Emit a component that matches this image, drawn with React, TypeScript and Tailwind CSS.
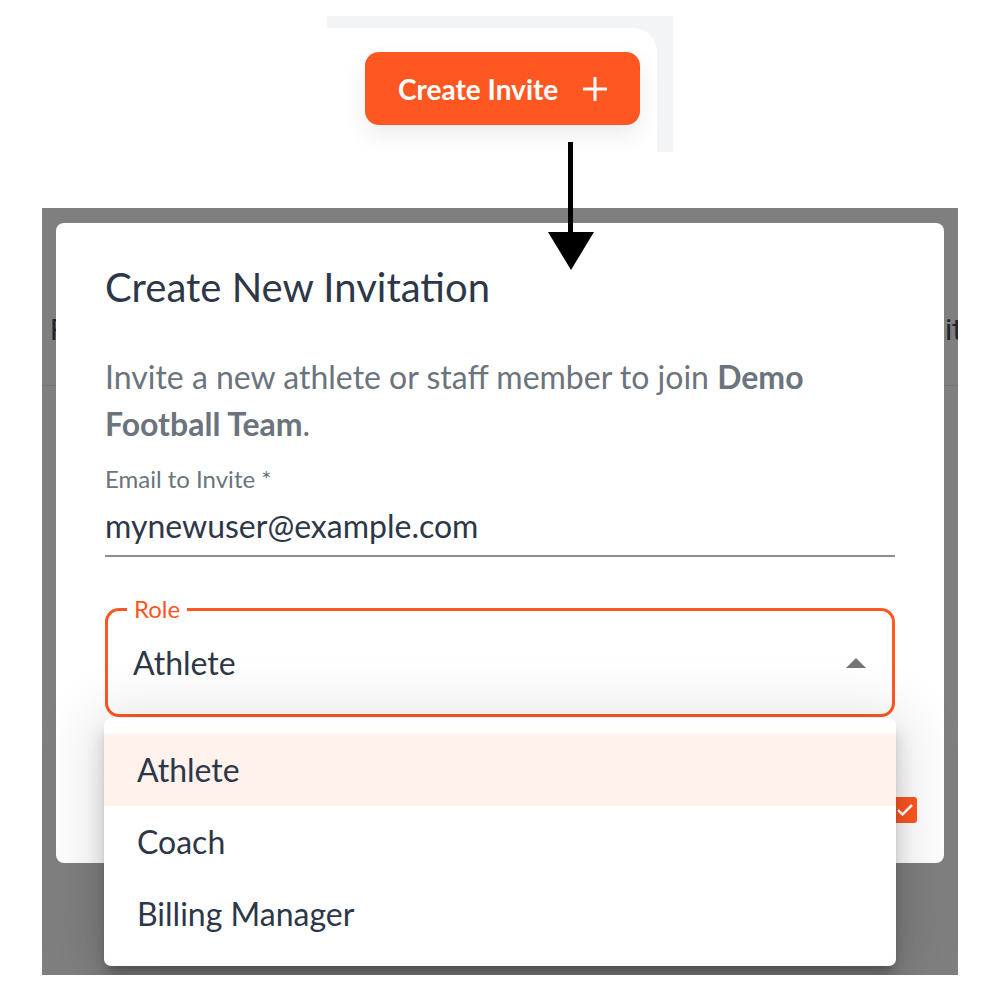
import React from "react";

export default function App() {
  return (
    <div className="relative w-[1000px] h-[1000px] bg-white font-['Lato',sans-serif] overflow-hidden">
      {/* Top snippet */}
      <div className="ml-[327px] mt-[16px] w-[346px] h-[136px] bg-[#f3f4f6] pt-[12px] overflow-hidden">
        <div className="w-[330px] h-[124px] bg-white rounded-tr-[24px] pl-[38px] pt-[24px]">
          <button className="w-[275px] h-[73px] rounded-[14px] bg-[#ff5722] flex items-center pl-[33px] gap-[25px] text-white text-[28px] font-bold shadow-[0_10px_24px_rgba(0,0,0,0.08)]">
            <span>Create Invite</span>
            <svg width="24" height="24" viewBox="0 0 24 24" fill="none" stroke="white" strokeWidth="3" strokeLinecap="round">
              <path d="M12 1v22M1 12h22" />
            </svg>
          </button>
        </div>
      </div>

      {/* Bottom snippet */}
      <div className="relative ml-[42px] mt-[56px] w-[916px] h-[767px] bg-[#7f7f80] overflow-hidden">
        <div className="flex justify-between pl-[8px] pt-[102px] text-[30px] text-[#21252c] font-['Roboto',sans-serif] leading-[40px]">
          <span>F</span>
          <span className="-mr-[4px]">it</span>
        </div>
        <div className="mt-[35px] border-b border-[#737373]" />

        {/* Dialog */}
        <div className="absolute left-[14px] top-[15px] w-[888px] h-[640px] bg-white rounded-[8px] px-[49px] pt-[40px]">
          <h2 className="text-[40px] leading-[48px] text-[#2d3748] font-normal">Create New Invitation</h2>
          <p className="mt-[42px] text-[32px] leading-[47px] text-[#6b747c] w-[720px]">
            Invite a new athlete or staff member to join <b className="font-bold">Demo Football Team</b>.
          </p>
          <div className="mt-[18px] text-[24px] leading-[28px] text-[#6b747c]">Email to Invite *</div>
          <div className="mt-[15px] pb-[11px] border-b-2 border-[#8e8e8e] text-[32px] leading-[36px] text-[#2d3748]">
            mynewuser@example.com
          </div>
          <div className="relative mt-[51px] h-[109px] rounded-[14px] border-[3px] border-[#ff5722] flex items-center pl-[25px] pr-[26px]">
            <span className="absolute -top-[15px] left-[19px] px-[7px] bg-white text-[24px] leading-[26px] text-[#ff5722]">Role</span>
            <span className="flex-1 text-[32px] leading-[36px] text-[#2d3748]">Athlete</span>
            <svg width="20" height="10" viewBox="0 0 20 10">
              <path d="M0 10L10 0L20 10Z" fill="#757575" />
            </svg>
          </div>
          <div className="absolute left-[837px] top-[574px] w-[24px] h-[26px] rounded-[3px] bg-[#ff5722] flex items-center justify-center">
            <svg width="16" height="12" viewBox="0 0 16 12" fill="none" stroke="white" strokeWidth="2.5">
              <path d="M1 6l4.5 4.5L15 1" />
            </svg>
          </div>
        </div>

        {/* Menu */}
        <div className="absolute left-[62px] top-[510px] w-[792px] h-[248px] bg-white rounded-[7px] py-[16px] shadow-[0_9px_9px_-5px_rgba(0,0,0,0.2),0_14px_18px_2px_rgba(0,0,0,0.14),0_5px_60px_10px_rgba(0,0,0,0.12)]">
          <div className="h-[72px] flex items-center pl-[33px] bg-[#fff1ec] text-[32px] text-[#2d3748]">Athlete</div>
          <div className="h-[72px] flex items-center pl-[33px] text-[32px] text-[#2d3748]">Coach</div>
          <div className="h-[72px] flex items-center pl-[33px] text-[32px] text-[#2d3748]">Billing Manager</div>
        </div>
      </div>

      {/* Arrow */}
      <svg className="absolute left-[546px] top-[140px]" width="50" height="132" viewBox="0 0 50 132">
        <rect x="22" y="2" width="5" height="96" fill="black" />
        <path d="M2 92L48 92L25 130Z" fill="black" />
      </svg>
    </div>
  );
}
